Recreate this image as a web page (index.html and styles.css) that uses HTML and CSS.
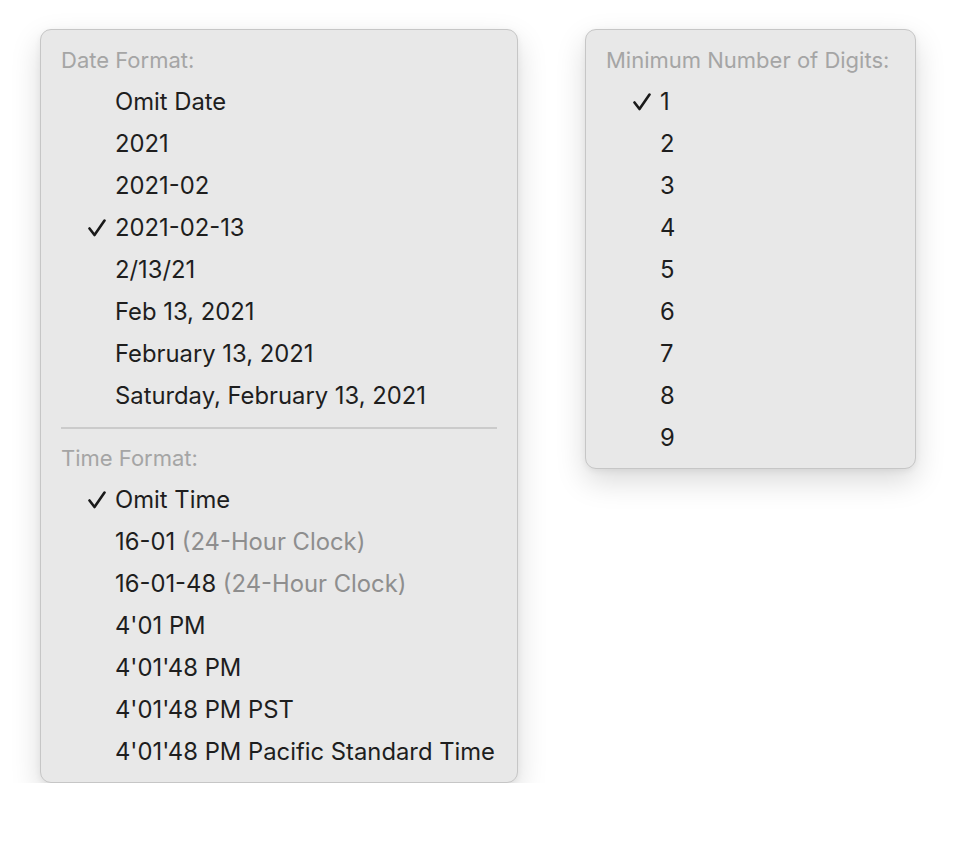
FILE: index.html
```html
<!DOCTYPE html>
<html>
<head>
<meta charset="utf-8">
<link rel="stylesheet" href="styles.css">
</head>
<body>
<div class="page">
  <div class="menu menu-left">
    <div class="header">Date Format:</div>
    <div class="item">Omit Date</div>
    <div class="item">2021</div>
    <div class="item">2021-02</div>
    <div class="item checked"><svg class="check" viewBox="0 0 18 18"><path d="M1.5 9.5 L6.5 16 L16.5 1.5"/></svg>2021-02-13</div>
    <div class="item">2/13/21</div>
    <div class="item">Feb 13, 2021</div>
    <div class="item">February 13, 2021</div>
    <div class="item">Saturday, February 13, 2021</div>
    <div class="separator"></div>
    <div class="header">Time Format:</div>
    <div class="item checked"><svg class="check" viewBox="0 0 18 18"><path d="M1.5 9.5 L6.5 16 L16.5 1.5"/></svg>Omit Time</div>
    <div class="item">16-01 <span class="dim">(24-Hour Clock)</span></div>
    <div class="item">16-01-48 <span class="dim">(24-Hour Clock)</span></div>
    <div class="item">4'01 PM</div>
    <div class="item">4'01'48 PM</div>
    <div class="item">4'01'48 PM PST</div>
    <div class="item">4'01'48 PM Pacific Standard Time</div>
  </div>
  <div class="menu menu-right">
    <div class="header">Minimum Number of Digits:</div>
    <div class="item checked"><svg class="check" viewBox="0 0 18 18"><path d="M1.5 9.5 L6.5 16 L16.5 1.5"/></svg>1</div>
    <div class="item">2</div>
    <div class="item">3</div>
    <div class="item">4</div>
    <div class="item">5</div>
    <div class="item">6</div>
    <div class="item">7</div>
    <div class="item">8</div>
    <div class="item">9</div>
  </div>
</div>
</body>
</html>
```
FILE: styles.css
```css
html, body {
  margin: 0;
  padding: 0;
  background: #ffffff;
}
body {
  font-family: Inter, "Noto Sans", "Liberation Sans", sans-serif;
}
.page {
  display: flex;
  align-items: flex-start;
  gap: 67px;
  padding: 29px 0 0 40px;
}
.menu {
  box-sizing: border-box;
  background: #e8e8e8;
  border: 1px solid #c6c6c6;
  border-radius: 11px;
  box-shadow: 0 12px 30px rgba(0, 0, 0, 0.15), 0 2px 6px rgba(0, 0, 0, 0.06);
  padding: 10px 0 9px;
}
.menu-left {
  width: 478px;
}
.menu-right {
  width: 331px;
}
.header {
  height: 41px;
  line-height: 41px;
  padding-left: 20px;
  font-size: 22px;
  color: #a5a5a5;
}
.item {
  position: relative;
  height: 42px;
  line-height: 42px;
  padding-left: 74px;
  font-size: 23.8px;
  color: #1e1e1e;
  white-space: nowrap;
}
.dim {
  color: #8e8e8e;
}
.check {
  position: absolute;
  left: 47px;
  top: 12px;
  width: 18px;
  height: 18px;
  fill: none;
  stroke: #1a1a1a;
  stroke-width: 2.6;
  stroke-linecap: round;
  stroke-linejoin: round;
}
.separator {
  height: 21px;
  display: flex;
  align-items: center;
  padding: 0 20px;
}
.separator::before {
  content: "";
  flex: 1;
  height: 2px;
  background: #cbcbcb;
}
```
